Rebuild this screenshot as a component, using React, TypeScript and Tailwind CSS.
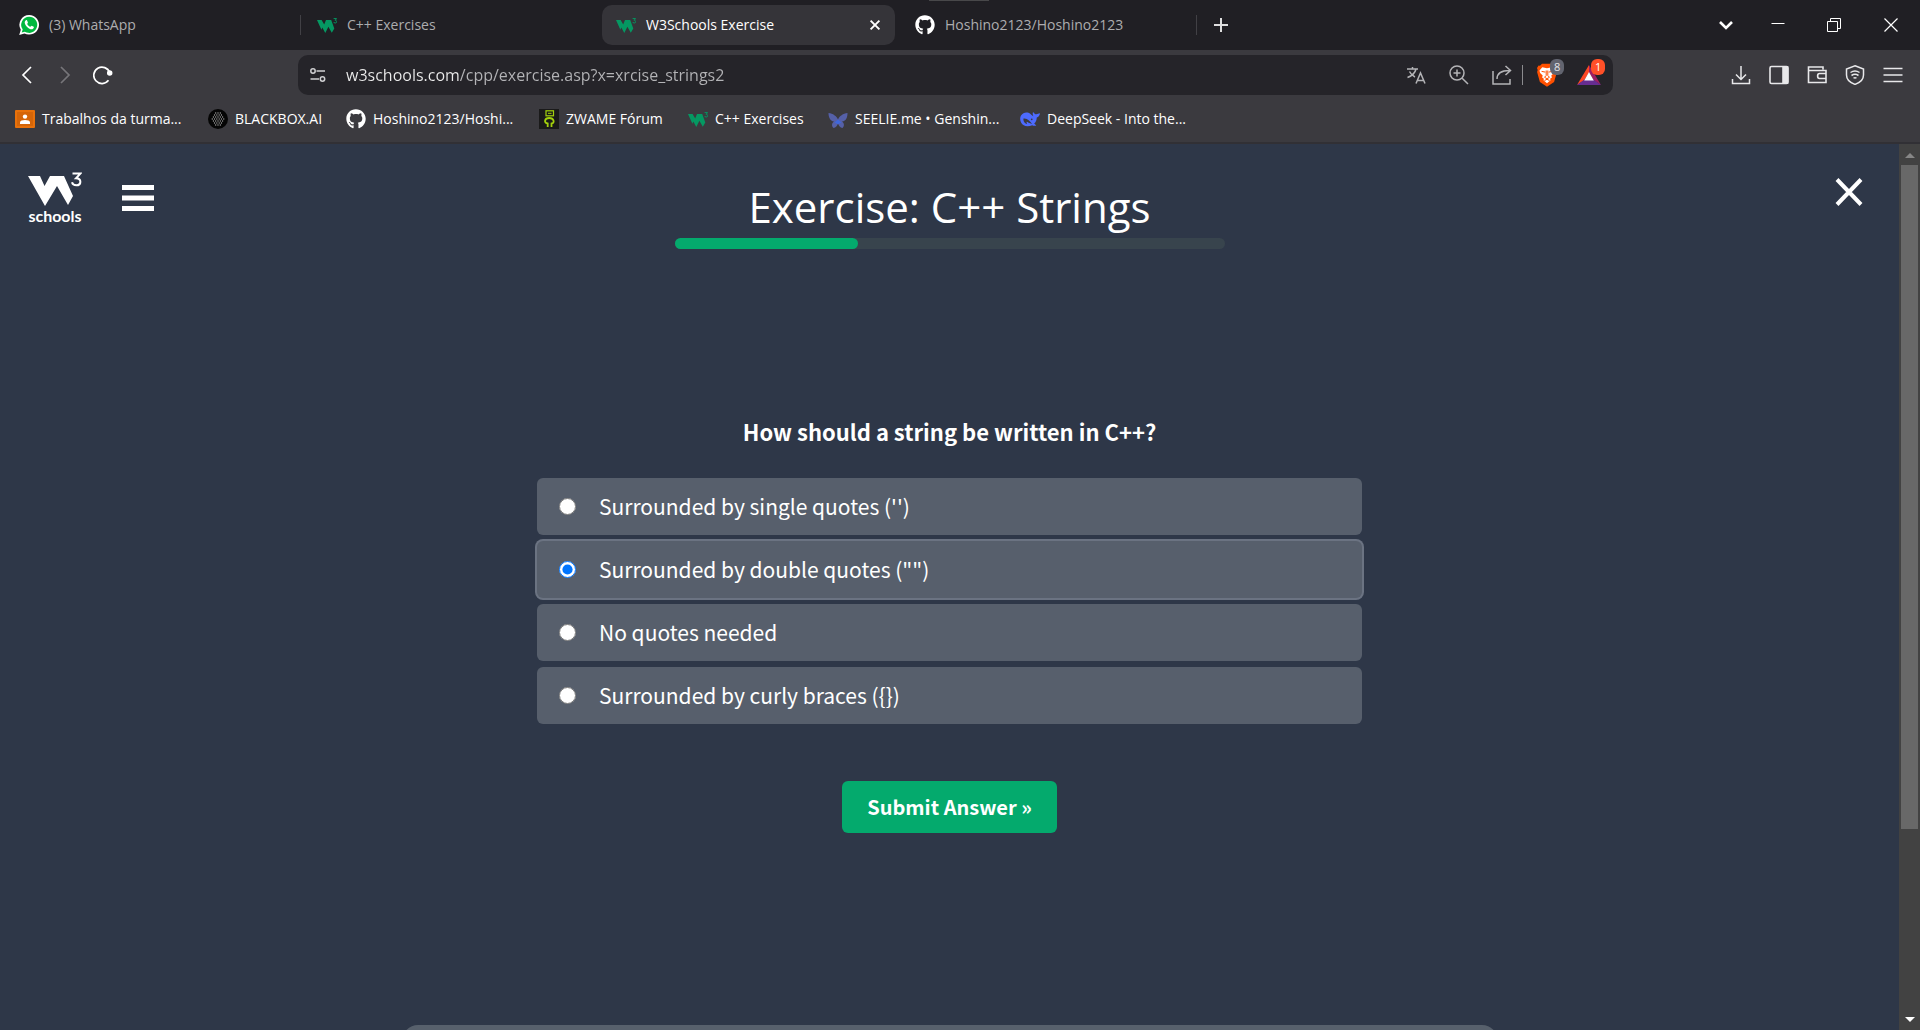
import { useState } from "react";
import type { ReactNode } from "react";
import { FaGithub } from "react-icons/fa";

const UI_FONT = "font-['Open_Sans',sans-serif]";
const BODY_FONT = "font-['Noto_Sans_CJK_SC',sans-serif]";

function W3Icon({ className = "h-5 w-5 text-[#059862]" }: { className?: string }) {
  return (
    <svg viewBox="0 0 20 20" className={className} aria-hidden="true">
      <path fill="currentColor" d="M0 5h4.600l2.600 4.400L9 5h5.200l3.100 8.400-2.500 4.400-3.400-6-3.100 6.100-3-5.300-.9 2.200z" />
      <path fill="none" stroke="currentColor" strokeWidth="1" d="M16.600 3.600h3l-1.500 1.700c2.200 0 2 2.700.2 2.700-.9 0-1.500-.4-1.600-1" />
    </svg>
  );
}

function WhatsAppIcon() {
  return (
    <svg viewBox="0 0 20 20" className="h-5 w-5" aria-hidden="true">
      <path fill="#fff" d="M10.200 0a9.800 9.800 0 1 1-4.700 18.400L.2 20l1.600-5.200A9.800 9.800 0 0 1 10.200 0z" />
      <path fill="#00b83f" d="M10.200 1.700a8.100 8.100 0 1 1-4.300 15l-3.200.9 1-3.100a8.100 8.100 0 0 1 6.500-12.800z" />
      <path fill="#fff" d="M7.100 5.200c.5-.2.9 0 1 .3l.8 1.900c.2.6-.8 1.200-.7 1.500.6 1.300 1.900 2.400 3.100 2.900.5.1 1-1.200 1.400-1l2 1c.6.3-.1 1.900-1 2.300-2.500 1.200-8-3-8-6.900 0-.8.7-1.700 1.400-2z" />
    </svg>
  );
}

function GithubIcon() {
  return <FaGithub className="h-5 w-5 text-white" aria-hidden="true" />;
}

function ClassroomIcon() {
  return (
    <svg viewBox="0 0 20 20" className="h-5 w-5" aria-hidden="true">
      <rect y="1" width="20" height="18" rx="1" fill="#e8710a" />
      <rect x="2" y="3" width="16" height="14" fill="#d56508" />
      <circle cx="10" cy="7.600" r="2.200" fill="#fff" />
      <path fill="#fff" d="M5 15v-1.800c0-3 10-3 10 0V15z" />
    </svg>
  );
}

function BlackboxIcon() {
  const dots: ReactNode[] = [];
  [3, 4, 5, 6, 5, 4, 3].forEach((n, row) => {
    for (let i = 0; i < n; i++) {
      dots.push(<circle key={`${row}-${i}`} cx={10 + (i - (n - 1) / 2) * 2.3} cy={4 + row * 2} r={0.65} />);
    }
  });
  return (
    <svg viewBox="0 0 20 20" className="h-5 w-5" aria-hidden="true">
      <circle cx="10" cy="10" r="10" fill="#050505" />
      <g fill="#a9a9a9">{dots}</g>
    </svg>
  );
}

function ZwameIcon() {
  return (
    <svg viewBox="0 0 20 20" className="h-5 w-5" aria-hidden="true">
      <rect width="20" height="20" fill="#1a1a1a" />
      <g fill="none" stroke="#a3d10c">
        <rect x="7" y="1.800" width="7.500" height="5" strokeWidth="1.200" />
        <path d="M9 4.300h3.500" strokeWidth="1" />
        <path strokeWidth="1.800" d="M8.700 18v-3.500C4.500 14 5.500 9 10.200 9s6 5 2.300 5.500V18" />
      </g>
    </svg>
  );
}

function ButterflyIcon() {
  return (
    <svg viewBox="0 0 20 20" className="h-5 w-5" aria-hidden="true">
      <path fill="#5560a8" d="M.5 4C5 4.500 8.500 7 10 10.500 11.500 7 15 4.500 19.500 4c0 4-1 8-5.500 8.500 2.500 1.500 2.500 5 .5 6.500-2.500-.5-3.500-2-4.500-4.500C9 17 8 18.500 5.500 19c-2-1.500-2-5 .5-6.500C2 12 .5 8 .5 4z" />
      <path fill="#3f67dc" d="m10 10.500 3.500 3-3.500 1.800-3.500-1.800z" />
    </svg>
  );
}

function WhaleIcon() {
  return (
    <svg viewBox="0 0 20 20" className="h-5 w-5" aria-hidden="true">
      <path fill="#4d6bfe" d="M1 6.500C3.500 3 7.500 2.800 10.500 5c1 .9 1.800 1.900 2.900 2.200-.8-1.700-1-3-.2-4.300 1 1.700 2 2.300 3.100 2.300 1.200-.2 2.300-.9 3.700-1-.2 2.400-1.500 3.800-3.200 4.300-.2 2.700-1 4.700-2.600 6.100l2.100 1.800c-1.700.6-3 .5-4-.2C7.500 18.400 3 17.300 1.200 13.800-.2 11.200-.1 8.500 1 6.500z" />
      <path fill="#3b3a3f" d="M3.500 9.500c3.500-.6 6.500 2.300 8.600 5.500-3.200-.6-4.300-2.300-5.400-2.200-.6.200.7 2.200.2 2.200C4.800 14.600 3 12 3.500 9.500z" />
      <circle cx="11.700" cy="10.300" r=".9" fill="#3b3a3f" />
    </svg>
  );
}

function Stroke({ d, w = 1.6, className = "h-5 w-5", children }: { d?: string; w?: number; className?: string; children?: ReactNode }) {
  return (
    <svg viewBox="0 0 20 20" className={className} fill="none" stroke="currentColor" strokeWidth={w} aria-hidden="true">
      {d && <path d={d} />}
      {children}
    </svg>
  );
}

function BraveIcon() {
  return (
    <svg viewBox="0 0 20 24" className="h-6 w-5" aria-hidden="true">
      <path fill="#ff5000" d="M5 .8h10l2 2 1.400-.2L20 5l-.7 2 .6 2-2.800 10L10 23.800 2.900 19 .1 9l.6-2L0 5l1.600-2.400L3 2.800z" />
      <path fill="#fff" d="M5.300 4.200 10 5.200l4.700-1 2.800 3.300-.6 2.500-2.600 2.600.6 2-2.100 1.500 1 .9L10 20.200 6.200 17l1-.9-2.100-1.500.6-2L3.100 10l-.6-2.500z" />
      <path fill="none" stroke="#ff5000" strokeWidth="1" d="m4.600 8.400 3.700.7M15.400 8.400l-3.700.7M9.200 7.500v5l-1.700 1.800 2.500 1.400 2.500-1.400-1.700-1.800v-5M7.500 17.500 10 16.300l2.500 1.200" />
    </svg>
  );
}

function BatIcon() {
  return (
    <svg viewBox="0 0 24 20" className="h-5 w-6" aria-hidden="true">
      <path fill="#ff4724" d="M12 0v7.500L7.500 15 0 20z" />
      <path fill="#9e1f63" d="M12 0v7.500l4.500 7.500 7.500 5z" />
      <path fill="#662d91" d="M0 20h24l-7.500-5.500h-9z" />
      <path fill="#fff" d="m12 7 4.800 8.500H7.200z" />
    </svg>
  );
}

function Tab({ icon, label }: { icon: ReactNode; label: string }) {
  return (
    <button className="flex h-10 flex-1 items-center gap-2.5 pl-4 text-left text-[#adadaf]">
      {icon}
      <span className="whitespace-nowrap">{label}</span>
    </button>
  );
}

const Divider = () => <span className="h-5 w-px bg-[#414045]" />;

const bookmarks = [
  { label: "Trabalhos da turma...", icon: <ClassroomIcon />, width: "w-[193px]" },
  { label: "BLACKBOX.AI", icon: <BlackboxIcon />, width: "w-[138px]" },
  { label: "Hoshino2123/Hoshi...", icon: <GithubIcon />, width: "w-[193px]" },
  { label: "ZWAME Fórum", icon: <ZwameIcon />, width: "w-[149px]" },
  { label: "C++ Exercises", icon: <W3Icon />, width: "w-[140px]" },
  { label: "SEELIE.me • Genshin...", icon: <ButterflyIcon />, width: "w-[192px]" },
  { label: "DeepSeek - Into the...", icon: <WhaleIcon />, width: "w-[193px]" },
];

const answers = [
  "Surrounded by single quotes ('')",
  'Surrounded by double quotes ("")',
  "No quotes needed",
  "Surrounded by curly braces ({})",
];

function TabStrip() {
  return (
    <div className="relative flex h-[50px] items-center bg-[#201f24] text-sm">
      <span className="absolute top-0 left-[929px] h-px w-[60px] bg-[#48484a]" />
      <div className="flex w-[1197px] items-center">
        <div className="flex w-[300px] pl-[3px]">
          <Tab icon={<WhatsAppIcon />} label="(3) WhatsApp" />
        </div>
        <Divider />
        <div className="flex w-[301px]">
          <Tab icon={<W3Icon />} label="C++ Exercises" />
        </div>
        <div className="flex h-10 w-[293px] items-center gap-2.5 rounded-[10px] bg-[#353439] pr-3 pl-3.5 text-white">
          <W3Icon />
          <span className="flex-1 whitespace-nowrap">W3Schools Exercise</span>
          <button aria-label="Close tab">
            <Stroke d="m4.500 4.500 11 11M15.500 4.500l-11 11" w={2.4} className="h-4 w-4" />
          </button>
        </div>
        <div className="flex flex-1 pl-1">
          <Tab icon={<GithubIcon />} label="Hoshino2123/Hoshino2123" />
        </div>
        <Divider />
      </div>
      <button aria-label="New tab" className="ml-3.5 text-[#dededf]">
        <Stroke d="M10 3v14M3 10h14" w={2} />
      </button>
      <div className="ml-auto flex items-center text-white">
        <button aria-label="Search tabs" className="mr-3.5">
          <Stroke d="m4 7 6 6 6-6" w={2.6} />
        </button>
        <button aria-label="Minimize" className="flex w-14 justify-center">
          <Stroke d="M3.500 8.500h13" w={1} />
        </button>
        <button aria-label="Restore" className="flex w-14 justify-center">
          <Stroke d="M3.500 6.500h10v10h-10zM6.500 6V3.500h10v10H14" w={1} />
        </button>
        <button aria-label="Close window" className="flex w-[58px] justify-center">
          <Stroke d="m3.500 3.500 13 13M16.500 3.500l-13 13" w={1.2} />
        </button>
      </div>
    </div>
  );
}

function Toolbar() {
  return (
    <div className="flex h-[50px] items-center">
      <div className="flex w-[298px] items-center gap-[18px] pl-[17px] text-white">
        <button aria-label="Back">
          <Stroke d="M14 2 6 10l8 8" w={1.7} />
        </button>
        <button aria-label="Forward" className="text-[#77767a]">
          <Stroke d="m6 2 8 8-8 8" w={1.7} />
        </button>
        <button aria-label="Reload">
          <Stroke d="M16.700 7.600A8.200 8.200 0 1 0 15.500 15.300" w={1.7}>
            <circle cx="16.700" cy="8" r="1.900" fill="currentColor" />
          </Stroke>
        </button>
      </div>
      <div className="flex h-10 w-[1315px] items-center rounded-[10px] bg-[#252429] pl-2.5 text-[#b4b4b7]">
        <button aria-label="Site information" className="text-[#d0d0d2]">
          <Stroke w={1.5}>
            <circle cx="5" cy="6" r="2.200" />
            <path d="M8.500 6H17M2.500 14H11" />
            <circle cx="14.500" cy="14" r="2.200" />
          </Stroke>
        </button>
        <input
          type="text"
          aria-label="Address"
          defaultValue="w3schools.com/cpp/exercise.asp?x=xrcise_strings2"
          className="ml-[18px] w-[500px] bg-[linear-gradient(90deg,#ececec_113px,#b4b4b7_113px)] bg-clip-text text-base text-transparent outline-none"
        />
        <div className="ml-auto flex items-center">
          <button aria-label="Translate">
            <Stroke w={1.5} d="M1 4h11M6.500 2v2M10 4C9 8.500 5.500 11 1.500 12.500M3.500 6.500c1.500 3 3 4.500 5.500 5.500M10 18.500l4.500-10.500L19 18.500M11.500 15.500h6" />
          </button>
          <button aria-label="Zoom" className="ml-[23px]">
            <Stroke w={1.5}>
              <circle cx="8" cy="8" r="7" />
              <path d="M8 4.500v7M4.500 8h7M13.200 13.200 19 19" />
            </Stroke>
          </button>
          <button aria-label="Share" className="ml-[23px]">
            <Stroke w={1.5} d="M1 6v13h17v-5M5 14c0-6 4-8.500 12.500-8.500M13.500 1l5 4.500-5 4.500" />
          </button>
          <span className="mr-3.5 ml-2.5 h-5 w-px bg-[#8b8b8e]" />
        </div>
        <button aria-label="Brave Shields" className="relative mr-5">
          <BraveIcon />
          <span className="absolute -top-1 left-[13px] rounded-md bg-[#62646f] px-1 text-[11px] leading-4 text-[#e5e5e8]">8</span>
        </button>
        <button aria-label="Brave Rewards" className="relative mr-3">
          <BatIcon />
          <span className="absolute -top-1.5 left-3.5 rounded-md bg-[#ff5028] px-1 text-[11px] leading-4 text-white">1</span>
        </button>
      </div>
      <div className="ml-auto flex items-center gap-[18px] pr-[17px] text-[#e8e8ea]">
        <button aria-label="Downloads">
          <Stroke w={1.5} d="M10 1v13M5 9.500l5 5 5-5M1.500 14v4.500h17V14" />
        </button>
        <button aria-label="Side panel">
          <Stroke w={1.6}>
            <rect x="1" y="1.500" width="18" height="17" rx="1.500" />
            <path d="M14 2h4.500v16H14z" fill="currentColor" />
          </Stroke>
        </button>
        <button aria-label="Wallet">
          <Stroke w={1.6} d="M16 4.500V2H1.500v15.500H19v-12H2M19 8.500h-6.500c-2.500 0-2.500 5 0 5H19" />
        </button>
        <button aria-label="VPN">
          <Stroke w={1.5} d="M10 .8 18.500 4v6c0 4-3 7.500-8.500 9.400C4.500 17.500 1.500 14 1.500 10V4zM5.500 7.500c3-2 6-2 9 0M6.500 10.500c2.300-1.500 4.700-1.500 7 0M8.500 13.200c1-.6 2-.6 3 0" />
        </button>
        <button aria-label="Menu">
          <Stroke w={1.6} d="M.5 3.500h19M.5 10h19M.5 16.500h19" />
        </button>
      </div>
    </div>
  );
}

function Bookmarks() {
  return (
    <nav aria-label="Bookmarks" className="flex h-[42px] items-center pb-1 pl-[15px] text-sm text-white">
      {bookmarks.map((b) => (
        <a key={b.label} href="#" className={`flex items-center gap-[7px] whitespace-nowrap ${b.width}`}>
          {b.icon}
          {b.label}
        </a>
      ))}
    </nav>
  );
}

function PageHeader() {
  return (
    <header className="grid grid-cols-[1fr_auto_1fr] items-start pt-7">
      <div className="flex items-center pl-7 text-white">
        <a href="#" aria-label="W3Schools home" className="block">
          <svg viewBox="0 0 54 52" className="h-[52px] w-[54px]">
            <path fill="currentColor" d="M0 4h12l4.500 10L22 4h14l9 20-5 9-11-19-12 20z" />
            <path fill="none" stroke="currentColor" strokeWidth="2" d="M44.500 1.500h8L48 6.300c6 .2 5.500 7 .3 7-2.500 0-3.800-1-4.300-3" />
            <text x="27" y="49.500" textAnchor="middle" fill="currentColor" fontFamily="Lato, sans-serif" fontWeight="700" fontSize="16">
              schools
            </text>
          </svg>
        </a>
        <button aria-label="Menu" className="ml-10">
          <svg viewBox="0 0 32 26" className="h-[26px] w-8" fill="currentColor">
            <path d="M0 0h32v5H0zM0 10.500h32v5H0zM0 21h32v5H0z" />
          </svg>
        </button>
      </div>
      <div className="w-[550px]">
        <h1 className={`pt-1 text-center text-[42px] leading-[62px] whitespace-nowrap text-white ${UI_FONT}`}>Exercise: C++ Strings</h1>
        <div className="h-[11px] rounded-full bg-[#38444d]" role="progressbar" aria-label="Exercise progress" aria-valuenow={1} aria-valuemax={3}>
          <div className="h-full w-1/3 rounded-full bg-[#04aa6d]" />
        </div>
      </div>
      <button aria-label="Close exercise" className="mt-1.5 mr-9 justify-self-end text-white">
        <svg viewBox="0 0 28 28" className="h-7 w-7" fill="none" stroke="currentColor" strokeWidth="4">
          <path d="m2 1.500 24 25M26 1.500l-24 25" />
        </svg>
      </button>
    </header>
  );
}

function Quiz() {
  const [selected, setSelected] = useState(1);
  return (
    <form className={`mx-auto mt-40 flex w-full max-w-[825px] flex-col items-center text-white ${BODY_FONT}`}>
      <h2 className="mt-1.5 text-[22px] leading-8 font-bold">How should a string be written in C++?</h2>
      <div role="radiogroup" className="mt-[31px] flex w-full flex-col gap-1.5">
        {answers.map((a, i) => (
          <label
            key={a}
            className={`flex h-[57px] items-center gap-[23px] rounded-md bg-[#575f6c] pl-[22px] text-[21px] ${selected === i ? "ring-2 ring-[#6b7382]" : ""}`}
          >
            <input type="radio" name="answer" checked={selected === i} onChange={() => setSelected(i)} className="h-[17px] w-[17px]" />
            {a}
          </label>
        ))}
      </div>
      <button type="button" className="mt-[57px] h-[52px] w-[215px] rounded-md bg-[#04aa6d] text-xl font-bold">
        Submit Answer »
      </button>
    </form>
  );
}

function Scrollbar() {
  return (
    <div className="flex w-[21px] flex-col items-center bg-[#424242]">
      <svg viewBox="0 0 10 5" className="mt-[9px] mb-[7px] h-[5px] w-[10px]" fill="#878787">
        <path d="M5 0l5 5H0z" />
      </svg>
      <div className="h-[664px] w-[17px] bg-[#686868]" />
      <svg viewBox="0 0 10 5" className="mt-auto mb-2 h-[5px] w-[10px]" fill="#fff">
        <path d="M5 5l5-5H0z" />
      </svg>
    </div>
  );
}

export default function App() {
  return (
    <div className={`flex h-screen flex-col overflow-hidden bg-[#2e3748] ${UI_FONT}`}>
      <TabStrip />
      <div className="border-b-2 border-[#313035] bg-[#3b3a3f]">
        <Toolbar />
        <Bookmarks />
      </div>
      <div className="flex min-h-0 flex-1">
        <main className="min-w-0 flex-1 overflow-hidden">
          <PageHeader />
          <Quiz />
          <div className="mx-auto mt-48 h-60 max-w-[1096px] rounded-2xl bg-[#57606c]" />
        </main>
        <Scrollbar />
      </div>
    </div>
  );
}
